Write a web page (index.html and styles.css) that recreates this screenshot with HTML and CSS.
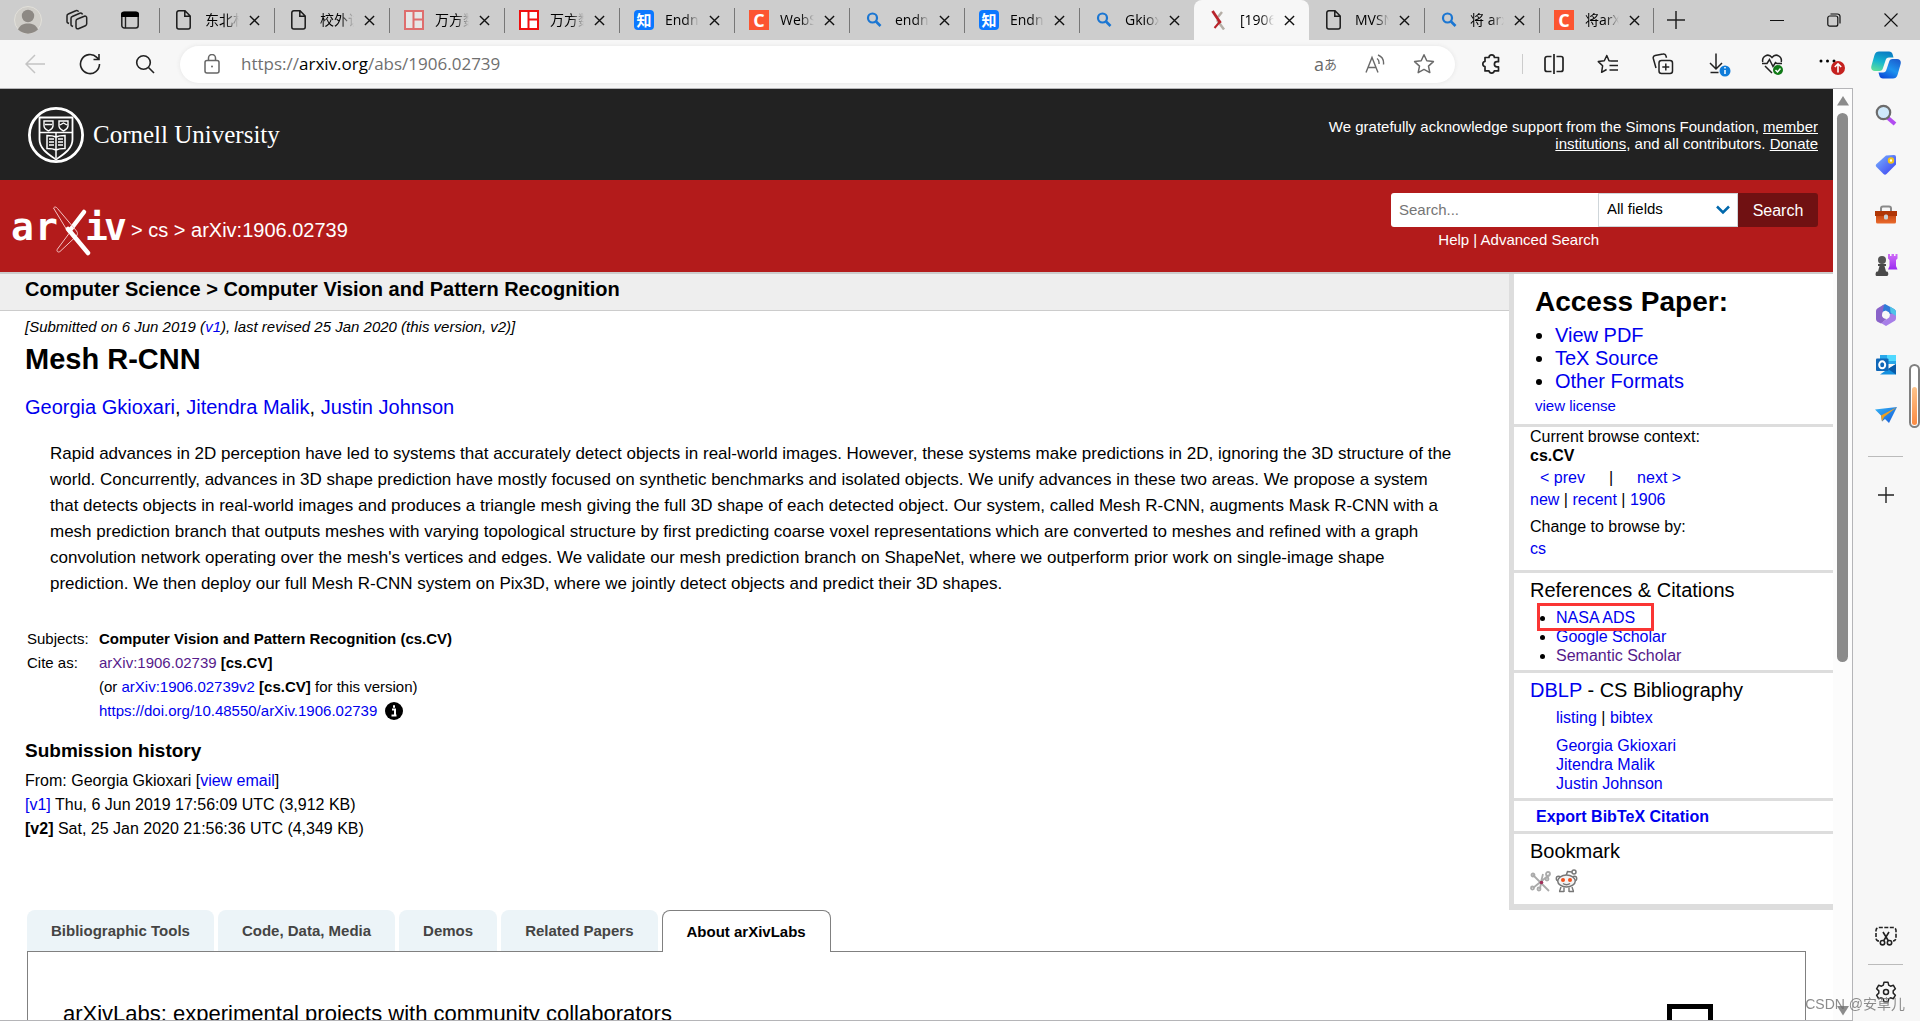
FILE: index.html
```html
<!DOCTYPE html>
<html lang="en">
<head>
  <meta charset="UTF-8">
  <meta name="viewport" content="width=device-width, initial-scale=1.0">
  <title>[1906.02739] Mesh R-CNN</title>
  <link rel="stylesheet" href="styles.css">
</head>
<body>
  <!-- Shared icons -->
  <svg class="defs" width="0" height="0">
    <symbol id="i-close" viewBox="0 0 12 12"><path d="M1 1l10 10M11 1L1 11" fill="none" stroke="#111" stroke-width="1.5"/></symbol>
    <symbol id="i-page" viewBox="0 0 20 20"><path d="M4.8 .8H11l5.200 5.200v10.900a2 2 0 0 1-2 2H4.800a2 2 0 0 1-2-2V2.800a2 2 0 0 1 2-2zM10.800 1v5.200H16" fill="none" stroke="#1a1a1a" stroke-width="1.500"/></symbol>
    <symbol id="i-wanfang" viewBox="0 0 20 20"><path fill="#fff" d="M0 0h20v20H0z"/><path d="M1 1h18v18H1zM9.500 1v18M9.500 9.500H19" fill="none" stroke="currentColor" stroke-width="2"/></symbol>
    <symbol id="i-search" viewBox="0 0 20 20"><circle cx="8.500" cy="8" r="4.500" fill="none" stroke="#1b76d2" stroke-width="2.200"/><path d="M12 11.500l4.500 4.500" stroke="#1b76d2" stroke-width="2.600"/></symbol>
    <linearGradient id="g-blue" x1="0" y1="0" x2="1" y2="1"><stop offset="0" stop-color="#35b5f5"/><stop offset="1" stop-color="#1557d8"/></linearGradient>
    <linearGradient id="g-teal" x1="0.500" y1="0" x2="0.200" y2="1"><stop offset="0" stop-color="#0a7fc4"/><stop offset="0.500" stop-color="#16b5cf"/><stop offset="1" stop-color="#5fe09a"/></linearGradient>
    <linearGradient id="g-sky" x1="0.800" y1="0" x2="0.200" y2="1"><stop offset="0" stop-color="#1b5fd0"/><stop offset="0.500" stop-color="#1d93ee"/><stop offset="1" stop-color="#0b48d8"/></linearGradient>
    <linearGradient id="g-tag" x1="0" y1="0" x2="1" y2="1"><stop offset="0" stop-color="#7ab5ff"/><stop offset="1" stop-color="#3b3cf0"/></linearGradient>
    <linearGradient id="g-bag" x1="0" y1="0" x2="0" y2="1"><stop offset="0" stop-color="#b83a08"/><stop offset="1" stop-color="#ea6a2c"/></linearGradient>
    <linearGradient id="g-rook" x1="0" y1="0" x2="0" y2="1"><stop offset="0" stop-color="#d06cf8"/><stop offset="1" stop-color="#9a2cf0"/></linearGradient>
  </svg>

  <!-- Tab strip -->
  <header class="tabstrip">
    <div class="strip-tools">
      <button class="icon-btn" aria-label="Profile"><svg width="28" height="28" viewBox="0 0 28 28"><circle cx="14" cy="14" r="13.500" fill="#d0cec9" stroke="#e2e0da"/><circle cx="14" cy="10" r="6.200" fill="#8d8984"/><path d="M4 23.500c2-4.500 5.500-6 10-6s8 1.500 10 6c-5.500 5.500-14.500 5.500-20 0z" fill="#8d8984"/></svg></button>
      <div class="strip-group">
        <button class="icon-btn" aria-label="Workspaces"><svg width="22" height="22" viewBox="0 0 22 22" fill="none" stroke="#222" stroke-width="1.500"><path d="M11.500 10l6.800-2.800a1.700 1.700 0 0 1 2.400 1.600v6a2 2 0 0 1-1.300 1.900l-7 3a1.700 1.700 0 0 1-2.400-1.600v-6.200a2 2 0 0 1 1.500-1.900zM7 17.500l-1-.5a1.500 1.500 0 0 1-1-1.500V9.500a2 2 0 0 1 1.300-2l7.500-3.300a2 2 0 0 1 2.700 1.300M3 14.500l-1-.5a1.500 1.500 0 0 1-1-1.500V7a2 2 0 0 1 1.300-2l7.500-3.300a2 2 0 0 1 2.700 1"/></svg></button>
        <button class="icon-btn" aria-label="Tab actions"><svg width="20" height="20" viewBox="0 0 20 20"><rect x="1.800" y="2.500" width="16.400" height="15.500" rx="2.500" fill="none" stroke="#222" stroke-width="1.500"/><path d="M1 7V4.500a3 3 0 0 1 3-3h12a3 3 0 0 1 3 3V7z"/><path d="M5.500 7v11" stroke="#222" stroke-width="1.400"/></svg></button>
      </div>
    </div>
    <nav class="tabs" aria-label="Open tabs">
      <div class="tab"><svg class="fav"><use href="#i-page"/></svg><span class="tab-title">东北林</span><button class="tab-close" aria-label="Close tab"><svg><use href="#i-close"/></svg></button></div>
      <div class="tab"><svg class="fav"><use href="#i-page"/></svg><span class="tab-title">校外访</span><button class="tab-close" aria-label="Close tab"><svg><use href="#i-close"/></svg></button></div>
      <div class="tab"><svg class="fav wanfang faded"><use href="#i-wanfang"/></svg><span class="tab-title">万方数</span><button class="tab-close" aria-label="Close tab"><svg><use href="#i-close"/></svg></button></div>
      <div class="tab"><svg class="fav wanfang"><use href="#i-wanfang"/></svg><span class="tab-title">万方数</span><button class="tab-close" aria-label="Close tab"><svg><use href="#i-close"/></svg></button></div>
      <div class="tab"><span class="fav fav-zhi">知</span><span class="tab-title">Endn</span><button class="tab-close" aria-label="Close tab"><svg><use href="#i-close"/></svg></button></div>
      <div class="tab"><span class="fav fav-c">C</span><span class="tab-title">WebS</span><button class="tab-close" aria-label="Close tab"><svg><use href="#i-close"/></svg></button></div>
      <div class="tab"><svg class="fav"><use href="#i-search"/></svg><span class="tab-title">endn</span><button class="tab-close" aria-label="Close tab"><svg><use href="#i-close"/></svg></button></div>
      <div class="tab"><span class="fav fav-zhi">知</span><span class="tab-title">Endn</span><button class="tab-close" aria-label="Close tab"><svg><use href="#i-close"/></svg></button></div>
      <div class="tab"><svg class="fav"><use href="#i-search"/></svg><span class="tab-title">Gkiox</span><button class="tab-close" aria-label="Close tab"><svg><use href="#i-close"/></svg></button></div>
      <div class="tab active"><svg class="fav" viewBox="0 0 20 20"><path d="M13 2l-4 5M8 10l7 9.500" stroke="#b5aea6" stroke-width="2.500"/><path d="M3.500 1l8 12" stroke="#b8232a" stroke-width="2.800"/><path d="M11.500 11l-6 7" stroke="#b8232a" stroke-width="2"/></svg><span class="tab-title">[1906</span><button class="tab-close" aria-label="Close tab"><svg><use href="#i-close"/></svg></button></div>
      <div class="tab"><svg class="fav"><use href="#i-page"/></svg><span class="tab-title">MVSN</span><button class="tab-close" aria-label="Close tab"><svg><use href="#i-close"/></svg></button></div>
      <div class="tab"><svg class="fav"><use href="#i-search"/></svg><span class="tab-title">将 arx</span><button class="tab-close" aria-label="Close tab"><svg><use href="#i-close"/></svg></button></div>
      <div class="tab last"><span class="fav fav-c">C</span><span class="tab-title">将arX</span><button class="tab-close" aria-label="Close tab"><svg><use href="#i-close"/></svg></button></div>
    </nav>
    <button class="icon-btn new-tab" aria-label="New tab"><svg width="18" height="18" viewBox="0 0 18 18"><path d="M9 0v18M0 9h18" stroke="#222" stroke-width="1.500"/></svg></button>
    <div class="window-controls">
      <button class="icon-btn" aria-label="Minimize"><svg width="14" height="14" viewBox="0 0 14 14"><path d="M0 7.500h14" stroke="#111"/></svg></button>
      <button class="icon-btn" aria-label="Restore"><svg width="14" height="14" viewBox="0 0 14 14" fill="none" stroke="#111" stroke-width="1.200"><rect x=".8" y="3" width="10" height="10.200" rx="2"/><path d="M3.500 1h7a2.500 2.500 0 0 1 2.500 2.500v7"/></svg></button>
      <button class="icon-btn" aria-label="Close window"><svg width="14" height="14" viewBox="0 0 14 14"><path d="M.5 .5l13 13M13.500 .5l-13 13" stroke="#111" stroke-width="1.100"/></svg></button>
    </div>
  </header>

  <div class="window">
    <div class="content">
      <!-- Toolbar -->
      <div class="toolbar">
        <button class="icon-btn" aria-label="Back"><svg width="20" height="20" viewBox="0 0 20 20" fill="none" stroke="#c4c4c4" stroke-width="1.500"><path d="M20 10H1M10 1L1 10l9 9"/></svg></button>
        <button class="icon-btn" aria-label="Refresh"><svg width="22" height="22" viewBox="0 0 22 22" fill="none" stroke="#222" stroke-width="1.600"><path d="M20.500 11A9.500 9.500 0 1 1 17.800 4.400L20 6.500M20 1v5.500h-5.500"/></svg></button>
        <button class="icon-btn" aria-label="Search"><svg width="20" height="20" viewBox="0 0 20 20" fill="none" stroke="#222" stroke-width="1.600"><circle cx="8.500" cy="8.500" r="6.800"/><path d="M13.500 13.500l5.500 5.500"/></svg></button>
        <div class="address">
          <svg width="16" height="20" viewBox="0 0 16 20" fill="none" stroke="#666" stroke-width="1.500"><rect x="1" y="6.500" width="14" height="12.500" rx="2"/><path d="M4.500 6.500V4a3.500 3.500 0 0 1 7 0v2.500"/><circle cx="8" cy="12.500" r="1" fill="#666" stroke="none"/></svg>
          <span class="url">https://<b>arxiv.org</b>/abs/1906.02739</span>
          <button class="icon-btn translate" aria-label="Translate">a<small>あ</small></button>
          <button class="icon-btn" aria-label="Read aloud"><svg width="20" height="20" viewBox="0 0 20 20" fill="none" stroke="#6a6a6a" stroke-width="1.400"><path d="M1 18.500L7 3.500l6 15M3 13.500h8M12 4.500c1.500 1 2.300 3 2 5.500M13 1c3.800 1.500 6 5 5.500 9.500"/></svg></button>
          <button class="icon-btn" aria-label="Add to favorites"><svg width="22" height="22" viewBox="0 0 22 22" fill="none" stroke="#6a6a6a" stroke-width="1.500" stroke-linejoin="round"><path d="M11 1.800l2.800 6 6.600.8-4.900 4.500 1.300 6.500L11 16.400l-5.800 3.200 1.300-6.500L1.600 8.600l6.600-.8z"/></svg></button>
        </div>
        <div class="actions">
          <button class="icon-btn" aria-label="Extensions"><svg width="20" height="22" viewBox="0 0 20 22" fill="none" stroke="#222" stroke-width="1.700" stroke-linejoin="round"><path d="M4 4.500h4a2.700 2.700 0 0 1 5.400 0H17.500v4.200h-1.500a2.600 2.600 0 0 0 0 5.200h1.500v4h-4.200a2.700 2.700 0 0 1-5.300 0H4v-4.200a2.700 2.700 0 0 1 0-5.300z"/></svg></button>
          <span class="divider"></span>
          <button class="icon-btn" aria-label="Split screen"><svg width="20" height="20" viewBox="0 0 20 20" fill="none" stroke="#222" stroke-width="1.700"><path d="M10 0v20M7.500 2.500H3a2 2 0 0 0-2 2v11a2 2 0 0 0 2 2h4.500M12.500 2.500H17a2 2 0 0 1 2 2v11a2 2 0 0 1-2 2h-4.500"/></svg></button>
          <button class="icon-btn" aria-label="Favorites"><svg width="22" height="20" viewBox="0 0 22 20" fill="none" stroke="#222" stroke-width="1.500" stroke-linejoin="round"><path d="M14 7l-2-.3L9.800 1.500 7.300 6.700l-6 .9 4.300 4.200-1 6.500 5-2.800M14 7h7M12.500 11.500H21M12.500 16H21"/></svg></button>
          <button class="icon-btn" aria-label="Collections"><svg width="22" height="22" viewBox="0 0 22 22" fill="none" stroke="#222" stroke-width="1.500"><rect x="7" y="7.500" width="13.500" height="13" rx="2.500"/><path d="M13.800 10.500v7M10.300 14h7M4 15l-2.700-9.500a2.500 2.500 0 0 1 1.800-3L11 1a2.500 2.500 0 0 1 3 2l.5 1.800"/></svg></button>
          <button class="icon-btn" aria-label="Downloads"><svg class="badged" width="20" height="24" viewBox="0 0 20 24" fill="none" stroke="#222" stroke-width="1.500"><path d="M9 1.500v15M3 11l6 6 6-6M3.500 20.500h8"/><circle cx="18" cy="19" r="5.500" fill="#0f7cd9" stroke="none"/><path d="M18 18v4M18 15v1.500" stroke="#fff"/></svg></button>
          <button class="icon-btn" aria-label="Browser essentials"><svg width="24" height="24" viewBox="0 0 24 24" fill="none" stroke="#222" stroke-width="1.500"><path d="M2.800 10C1.500 4.500 8 .5 12 5.500 16 .5 22.500 4.500 21.200 10M2 11.500h5l2.500-4 3.500 7 2.500-4 1.500 1H22M5 14l7 7"/><circle cx="18" cy="18" r="5" fill="#117a18" stroke="none"/><path d="M15.500 18l2 2 3-3.500" stroke="#fff"/></svg></button>
          <button class="icon-btn" aria-label="Settings and more"><svg width="28" height="28" viewBox="0 0 28 28"><circle cx="4" cy="11" r="1.500"/><circle cx="10.500" cy="11" r="1.500"/><circle cx="17" cy="11" r="1.500"/><circle cx="21" cy="18" r="7" fill="#c5211f"/><path d="M21 22.500v-8M17.800 17l3.200-3.200 3.200 3.200" fill="none" stroke="#fff" stroke-width="1.600"/></svg></button>
        </div>
      </div>

      <div class="viewport">
        <div class="page">
          <!-- Cornell banner -->
          <div class="cornell">
            <a href="#" class="cornell-logo">
              <svg width="56" height="56" viewBox="0 0 56 56" fill="none" stroke="#fff"><circle cx="28" cy="28" r="26.600" stroke-width="2.800"/><path d="M11.500 10.500h33v22c0 9-8 14-16.500 20-8.500-6-16.500-11-16.500-20z" stroke-width="1.800"/><path d="M11 25.500h34" stroke-width="1.500"/><path d="M16 14h9v5c0 2.500-2 3.500-4.500 5-2.500-1.500-4.500-2.500-4.500-5zM31 14h9v5c0 2.500-2 3.500-4.500 5-2.500-1.500-4.500-2.500-4.500-5zM17 17.500h7M32 18l3.500-2 3.500 2" stroke-width="1.400"/><path d="M19 28.500c3 0 6 0 9 1.500 3-1.500 6-1.500 9-1.500v13c-3 0-6 0-9 1.500-3-1.500-6-1.500-9-1.500zM28 26v25M21 32h5M21 35h5M21 38h5M30 32h5M30 35h5M30 38h5" stroke-width="1.500"/></svg>
              <span>Cornell University</span>
            </a>
            <p class="support">We gratefully acknowledge support from the Simons Foundation, <a href="#">member institutions</a>, and all contributors. <a href="#">Donate</a></p>
          </div>

          <!-- arXiv header -->
          <div class="arxiv-header">
            <div class="crumbs">
              <svg class="arxiv-logo" width="115" height="52" viewBox="0 0 115 52" aria-label="arXiv">
                <g class="logo-text"><text x="-1" y="36">a</text><text x="23" y="36">r</text><text x="73" y="36">i</text><text x="92" y="36">v</text></g>
                <path d="M72 8L59 25" stroke="#fff" stroke-width="4.500" stroke-linecap="round"/>
                <path d="M41.500 4c1.500-1.800 3-.8 4 .5L64.500 27c1.500 2 1 3.500 0 5L48 47.500c-2 1.500-4-.5-2.500-2.500L57 29.500z" fill="none" stroke="#f4c4c4" stroke-width="1"/>
                <path d="M56 25L76 49" stroke="#fff" stroke-width="4.500" stroke-linecap="round"/>
              </svg>
              <span>&gt; <a href="#">cs</a> &gt; arXiv:1906.02739</span>
            </div>
            <form class="search">
              <div class="search-row">
                <input type="text" placeholder="Search..." aria-label="Search term or terms">
                <div class="select-wrap">
                  <select aria-label="Field to search"><option>All fields</option></select>
                  <svg width="16" height="16" viewBox="0 0 16 16"><path d="M2 4.500l6 6 6-6" fill="none" stroke="#0068ac" stroke-width="2.500"/></svg>
                </div>
                <button type="button">Search</button>
              </div>
              <div class="search-help"><a href="#">Help</a> | <a href="#">Advanced Search</a></div>
            </form>
          </div>

          <div class="abs-row">
            <main class="abs">
              <div class="subject-bar"><h1>Computer Science &gt; Computer Vision and Pattern Recognition</h1></div>
              <div class="abs-body">
                <div class="dateline">[Submitted on 6 Jun 2019 (<a href="#">v1</a>), last revised 25 Jan 2020 (this version, v2)]</div>
                <h2 class="title">Mesh R-CNN</h2>
                <div class="authors"><a href="#">Georgia Gkioxari</a>, <a href="#">Jitendra Malik</a>, <a href="#">Justin Johnson</a></div>
                <blockquote class="abstract">Rapid advances in 2D perception have led to systems that accurately detect objects in real-world images. However, these systems make predictions in 2D, ignoring the 3D structure of the world. Concurrently, advances in 3D shape prediction have mostly focused on synthetic benchmarks and isolated objects. We unify advances in these two areas. We propose a system that detects objects in real-world images and produces a triangle mesh giving the full 3D shape of each detected object. Our system, called Mesh R-CNN, augments Mask R-CNN with a mesh prediction branch that outputs meshes with varying topological structure by first predicting coarse voxel representations which are converted to meshes and refined with a graph convolution network operating over the mesh's vertices and edges. We validate our mesh prediction branch on ShapeNet, where we outperform prior work on single-image shape prediction. We then deploy our full Mesh R-CNN system on Pix3D, where we jointly detect objects and predict their 3D shapes.</blockquote>
                <table class="metatable">
                  <tr><td>Subjects:</td><td><b>Computer Vision and Pattern Recognition (cs.CV)</b></td></tr>
                  <tr><td>Cite as:</td><td><a href="#" class="visited">arXiv:1906.02739</a> <b>[cs.CV]</b></td></tr>
                  <tr><td></td><td>(or <a href="#">arXiv:1906.02739v2</a> <b>[cs.CV]</b> for this version)</td></tr>
                  <tr><td></td><td><div class="doi"><a href="#">https://doi.org/10.48550/arXiv.1906.02739</a><svg width="18" height="18" viewBox="0 0 18 18"><circle cx="9" cy="9" r="9"/><path d="M7 7.500h3v5.500M6.500 13.500h5M9 3.300v2.400" fill="none" stroke="#fff" stroke-width="2"/></svg></div></td></tr>
                </table>
                <div class="history">
                  <h2>Submission history</h2>
                  <p>From: Georgia Gkioxari [<a href="#">view email</a>]</p>
                  <p><a href="#">[v1]</a> Thu, 6 Jun 2019 17:56:09 UTC (3,912 KB)</p>
                  <p><b>[v2]</b> Sat, 25 Jan 2020 21:56:36 UTC (4,349 KB)</p>
                </div>
              </div>
            </main>

            <aside class="extra">
              <section class="access">
                <h2>Access Paper:</h2>
                <ul>
                  <li><a href="#">View PDF</a></li>
                  <li><a href="#">TeX Source</a></li>
                  <li><a href="#">Other Formats</a></li>
                </ul>
                <a href="#" class="license">view license</a>
              </section>
              <section class="browse">
                <p>Current browse context:</p>
                <p><b>cs.CV</b></p>
                <p class="prevnext"><a href="#">&lt; prev</a><span>|</span><a href="#">next &gt;</a></p>
                <p class="links"><a href="#">new</a> | <a href="#">recent</a> | <a href="#">1906</a></p>
                <p class="links change">Change to browse by:</p>
                <p class="links"><a href="#">cs</a></p>
              </section>
              <section class="refs">
                <h3>References &amp; Citations</h3>
                <ul>
                  <li class="marked"><a href="#">NASA ADS</a></li>
                  <li><a href="#">Google Scholar</a></li>
                  <li><a href="#" class="visited">Semantic Scholar</a></li>
                </ul>
              </section>
              <section class="dblp">
                <h3><a href="#">DBLP</a> - CS Bibliography</h3>
                <p><a href="#">listing</a> | <a href="#">bibtex</a></p>
                <p class="dblp-authors"><a href="#">Georgia Gkioxari</a><a href="#">Jitendra Malik</a><a href="#">Justin Johnson</a></p>
              </section>
              <section class="export"><a href="#">Export BibTeX Citation</a></section>
              <section class="bookmark">
                <h3>Bookmark</h3>
                <div class="bookmark-icons">
                  <a href="#" aria-label="BibSonomy"><svg width="22" height="24" viewBox="0 0 22 24" fill="none" stroke="#aaa" stroke-width="1.800"><path d="M3 6l16 16M19 6L3 19M11 13l2-8M11 14l-1 6"/><circle cx="3" cy="6" r="1.500"/><circle cx="18" cy="5" r="2"/><circle cx="17" cy="10" r="1.500"/><circle cx="2.500" cy="19" r="1.500"/><circle cx="9" cy="20" r="1.500"/><circle cx="11.500" cy="13.500" r="1.800" fill="#a0305a" stroke="none"/></svg></a>
                  <a href="#" aria-label="Reddit"><svg width="24" height="24" viewBox="0 0 24 24" fill="none" stroke="#777" stroke-width="1.500"><path d="M11 7l1.500-4.500L17 3"/><circle cx="19" cy="3" r="2"/><circle cx="3.500" cy="9.500" r="2.200"/><circle cx="19.500" cy="9.500" r="2.200"/><ellipse cx="11.500" cy="12" rx="8.800" ry="6" fill="#f3f3f3"/><path d="M6 18l-1.500 4.500M9 18.500V23M14 18.500V23M17 18l1.500 4.500M8 14.500c2 1.500 5 1.500 7 0" stroke-width="1.400"/><path d="M4 22.500h5M14 22.500h5"/><circle cx="8" cy="11" r="2" fill="#f4511e" stroke="none"/><circle cx="15" cy="11" r="2" fill="#f4511e" stroke="none"/></svg></a>
                </div>
              </section>
            </aside>
          </div>

          <!-- arXivLabs tabs -->
          <div class="labs">
            <div class="labs-tabs">
              <button>Bibliographic Tools</button>
              <button>Code, Data, Media</button>
              <button>Demos</button>
              <button>Related Papers</button>
              <button class="current">About arXivLabs</button>
            </div>
            <div class="labs-panel">
              <h2>arXivLabs: experimental projects with community collaborators</h2>
              <div class="labs-art"></div>
            </div>
          </div>
        </div>

        <div class="scrollbar">
          <svg width="12" height="10" viewBox="0 0 12 10"><path d="M6 0l6 9.500H0z" fill="#8b8b8b"/></svg>
          <div class="track"><div class="thumb"></div></div>
          <svg width="12" height="10" viewBox="0 0 12 10"><path d="M6 9.500L12 0H0z" fill="#8b8b8b"/></svg>
        </div>
      </div>
    </div>

    <!-- Browser sidebar -->
    <aside class="side">
      <button class="icon-btn copilot" aria-label="Copilot"><svg width="30" height="28" viewBox="0 0 30 28"><path d="M8 .5h10c2 0 3 1 3.500 2.500l1 3.500H18c-2 0-3 1-3.500 3l-2.500 7.500c-.5 2-1.500 3-3.500 3H4c-3 0-4.500-2-3.500-5.500l3-10.500C4.200 1.500 6 .5 8 .5z" fill="url(#g-teal)"/><path d="M22 27.500H12c-2 0-3-1-3.500-2.500l-1-3.500H12c2 0 3-1 3.500-3L18 11c.5-2 1.500-3 3.500-3H26c3 0 4.500 2 3.500 5.500l-3 10.500c-.7 2.500-2.500 3.500-4.500 3.500z" fill="url(#g-sky)"/></svg></button>
      <button class="icon-btn" aria-label="Search"><svg width="22" height="22" viewBox="0 0 22 22"><path d="M13 14l7 6" stroke="#b24cf0" stroke-width="4"/><circle cx="8.500" cy="8.500" r="6.700" fill="#cfe9fb" stroke="#6c6c6c" stroke-width="2.200"/></svg></button>
      <button class="icon-btn" aria-label="Shopping"><svg width="22" height="22" viewBox="0 0 22 22"><path d="M11 1.500L19 1a2 2 0 0 1 2 2v7.500L11.500 20c-1 1-2 1-3 0L1.500 13c-1-1-1-2 0-3z" fill="url(#g-tag)"/><circle cx="16" cy="6.500" r="2.200" fill="#fff" stroke="#f5c518" stroke-width="2"/></svg></button>
      <button class="icon-btn" aria-label="Tools"><svg width="24" height="22" viewBox="0 0 24 22"><path d="M7 7V4.500a2 2 0 0 1 2-2h6a2 2 0 0 1 2 2V7" fill="none" stroke="#8a8a8a" stroke-width="2"/><rect x="2" y="7" width="20" height="12.500" rx="1.500" fill="url(#g-bag)"/><path d="M1 7h22v5H1z" fill="#b03606"/><rect x="10" y="10.500" width="4" height="5" rx="1.500" fill="#c8d0d4"/></svg></button>
      <button class="icon-btn" aria-label="Games"><svg width="24" height="24" viewBox="0 0 24 24"><path d="M14 1h2v2h1.500V1h2.500v2h1.500V1h2v4.500l-1.500 1.500v6l1.500 3.500H14l1.500-3.500V7L14 5.500z" fill="url(#g-rook)"/><circle cx="8" cy="7" r="4" fill="#555"/><path d="M4 11h8v2h-1.500l1.500 5.500h1c1.500 0 2 4.500 0 4.500H2.500c-1.500 0-1-4.500.5-4.500h1L5.500 13H4z" fill="#4a4a4a"/></svg></button>
      <button class="icon-btn" aria-label="Microsoft 365"><svg width="22" height="22" viewBox="0 0 22 22"><path d="M10 0l9 5c1.500 1 2 2 2 3.500V12l-7-2-3-3.500-4 1.500V2z" fill="#2f7bd8"/><path d="M21 8v6c0 1.500-.5 2.500-2 3.300L11 22l-5-3 6-4 3-5z" fill="#a77ee8"/><path d="M9 .5L3 4C1.500 5 1 6 1 7.500V15c0 1.500 1 2.500 2.500 3.300L6 19.500l5.500-4.500L7 12z" fill="#8a63c9"/><path d="M15 2.500l4 2.500c1.500 1 2 2 2 3.500V12l-5.500-3.500z" fill="#4fc3e8"/><circle cx="11" cy="11" r="3.800" fill="#f7f7f7"/></svg></button>
      <button class="icon-btn" aria-label="Outlook"><svg width="22" height="22" viewBox="0 0 22 22"><path d="M5 1h16v9H5z" fill="#28a8ea"/><path d="M12 1h9v6h-9z" fill="#50d9ff"/><path d="M5 20.500h16V10l-8 5z" fill="#1490df"/><path d="M21 10v10.500L13 15z" fill="#0a5ba8"/><rect x="1" y="4.500" width="12.500" height="12.500" rx="1" fill="#0f67b8"/><ellipse cx="7.200" cy="10.800" rx="3" ry="3.500" fill="none" stroke="#fff" stroke-width="2"/></svg></button>
      <button class="icon-btn" aria-label="Drop"><svg width="22" height="22" viewBox="0 0 22 22"><path d="M0 5.500L22 3 14 19l-4-4-3 2.500-1-6z" fill="url(#g-blue)"/><path d="M22 3L6 11.500l1 6L9 13z" fill="#f0a020"/></svg></button>
      <hr>
      <button class="icon-btn" aria-label="Add to sidebar"><svg width="16" height="16" viewBox="0 0 16 16"><path d="M8 0v16M0 8h16" stroke="#222" stroke-width="1.400"/></svg></button>
      <div class="side-bottom">
        <button class="icon-btn" aria-label="Screenshot"><svg width="22" height="20" viewBox="0 0 22 20" fill="none" stroke="#222" stroke-width="1.600"><path d="M4 15a3 3 0 0 1-3-3V4.500a3 3 0 0 1 3-3h14a3 3 0 0 1 3 3V12a3 3 0 0 1-3 3" stroke-dasharray="4 1.500"/><path d="M8 6l5.500 9M14 6l-5.500 9"/><circle cx="7.500" cy="16.700" r="2.200"/><circle cx="14.500" cy="16.700" r="2.200"/></svg></button>
        <hr>
        <button class="icon-btn" aria-label="Settings"><svg width="22" height="22" viewBox="0 0 22 22" fill="none" stroke="#222" stroke-width="1.500" stroke-linejoin="round"><path d="M9 1.200h4l.7 3 1.800 1 2.900-.9 2 3.500-2.200 2.100v2.200l2.200 2.100-2 3.500-2.900-.9-1.800 1-.7 3H9l-.7-3-1.800-1-2.900.9-2-3.500 2.200-2.100V9.900L1.600 7.800l2-3.500 2.900.9 1.800-1z"/><circle cx="11" cy="11" r="2.500"/></svg></button>
      </div>
    </aside>
  </div>

  <div class="meter"><span></span></div>
  <div class="watermark">CSDN @安草儿</div>
</body>
</html>
```

FILE: styles.css
```css
* {
  box-sizing: border-box;
}

body {
  margin: 0;
  height: 100vh;
  display: flex;
  flex-direction: column;
  overflow: hidden;
  background: #f7f7f7;
  font-family: "Liberation Sans", Arial, sans-serif;
  color: #000;
}

h1, h2, h3, p, ul, blockquote {
  margin: 0;
  padding: 0;
}

a {
  color: #0000ee;
  text-decoration: none;
}

a.visited {
  color: #551a8b;
}

button {
  font-family: inherit;
  border: 0;
  padding: 0;
  background: none;
}

svg {
  display: block;
  flex: none;
}

.defs {
  position: absolute;
}

.icon-btn {
  display: flex;
  align-items: center;
  justify-content: center;
  flex: none;
}

/* Tab strip */
.tabstrip {
  display: flex;
  height: 40px;
  flex: none;
  background: #cdcdcd;
  font-family: "Open Sans", "Noto Sans CJK SC", sans-serif;
}

.strip-tools {
  display: flex;
  align-items: center;
  gap: 24px;
  padding: 0 19px 0 14px;
}

.strip-group {
  display: flex;
  align-items: center;
  gap: 32px;
}

.tabs {
  display: flex;
  flex: 0 1 1495px;
  min-width: 0;
}

.tab {
  display: flex;
  align-items: center;
  flex: 1 1 0;
  min-width: 0;
  padding: 0 14px 0 15px;
  position: relative;
}

.tab::before {
  content: "";
  position: absolute;
  left: 0;
  top: 8px;
  height: 25px;
  border-left: 1px solid #777;
}

.tab.active {
  background: #f7f7f7;
  border-radius: 8px 8px 0 0;
}

.tab.active::before,
.tab.active + .tab::before {
  display: none;
}

.tab.last::after {
  content: "";
  position: absolute;
  right: 0;
  top: 8px;
  height: 25px;
  border-left: 1px solid #777;
}

.fav {
  width: 20px;
  height: 20px;
  flex: none;
  font-size: 15px;
  line-height: 20px;
  text-align: center;
  color: #fff;
}

.wanfang {
  color: #f01010;
}

.faded {
  opacity: 0.5;
}

.fav-zhi {
  border-radius: 4px;
  background: #0b78ff;
  font-weight: bold;
}

.fav-c {
  background: #fc5531;
  font-size: 18px;
  font-weight: bold;
}

.tab-title {
  flex: 1;
  min-width: 0;
  margin: 0 10px 0 11px;
  overflow: hidden;
  white-space: nowrap;
  font-size: 14px;
  line-height: 20px;
  mask-image: linear-gradient(to right, #000 60%, transparent);
}

.tab-close svg {
  width: 11px;
  height: 11px;
}

.new-tab {
  width: 44px;
}

.window-controls {
  display: flex;
  align-items: center;
  gap: 43px;
  margin-left: auto;
  padding-right: 22px;
}

/* Window */
.window {
  display: flex;
  flex: 1;
  min-height: 0;
}

.content {
  display: flex;
  flex-direction: column;
  flex: 1;
  min-width: 0;
}

.toolbar {
  display: flex;
  align-items: center;
  height: 48px;
  flex: none;
  gap: 34px;
  padding: 0 8px 0 25px;
}

.address {
  display: flex;
  align-items: center;
  flex: 1;
  height: 37px;
  gap: 28px;
  margin: 0 -8px 0 -9px;
  padding: 0 20px 0 24px;
  border-radius: 19px;
  background: #fff;
  box-shadow: 0 0 4px #e4e4e4;
  font-family: "Open Sans", "Noto Sans CJK JP", sans-serif;
}

.url {
  flex: 1;
  margin-left: -7px;
  font-size: 17px;
  line-height: 22px;
  color: #6f6f6f;
}

.url b {
  font-weight: normal;
  color: #000;
}

.translate {
  font-family: inherit;
  font-size: 18px;
  line-height: 24px;
  color: #6a6a6a;
}

.translate small {
  font-size: 13px;
}

.actions {
  display: flex;
  align-items: center;
  gap: 33px;
}

.badged {
  overflow: visible;
}

.divider {
  width: 1px;
  height: 20px;
  margin: 0 -12px;
  background: #ccc;
}

.viewport {
  display: flex;
  flex: 1;
  min-height: 0;
  border: solid #b5b5b8;
  border-width: 1px 1px 1px 0;
  background: #fff;
}

.page {
  flex: 1;
  min-width: 0;
  overflow: hidden;
}

/* Cornell banner */
.cornell {
  display: flex;
  align-items: center;
  justify-content: space-between;
  height: 91px;
  padding: 0 15px 0 28px;
  background: #222;
  color: #fff;
}

.cornell-logo {
  display: flex;
  align-items: center;
  gap: 9px;
  color: #fff;
  font-family: "Liberation Serif", serif;
  font-size: 25px;
  line-height: 30px;
}

.support {
  width: 500px;
  text-align: right;
  font-size: 15px;
  line-height: 17px;
}

.support a {
  color: #fff;
  text-decoration: underline;
}

/* arXiv header */
.arxiv-header {
  display: flex;
  justify-content: space-between;
  height: 94px;
  padding: 13px 15px 0 12px;
  border-bottom: 2px solid #ccc;
  background: #b31b1b;
  color: #fff;
}

.arxiv-header a {
  color: #fff;
}

.crumbs {
  display: flex;
  align-items: center;
  gap: 4px;
  height: 74px;
  font-size: 20px;
}

.logo-text {
  fill: #fff;
  font: bold 38px "DejaVu Sans Mono", monospace;
}

.search-row {
  display: flex;
  height: 34px;
}

.search-row input,
.search-row select {
  height: 34px;
  margin: 0;
  border: 1px solid #cfd6da;
  border-radius: 0;
  background: #fff;
  font-family: inherit;
  font-size: 15px;
  color: #000;
}

.search-row input {
  width: 208px;
  padding: 0 8px 1px;
  border-width: 0 1px 0 0;
  border-radius: 3px 0 0 3px;
}

.search-row select {
  width: 139px;
  padding: 0 8px 3px;
  border-left: 0;
  appearance: none;
}

.select-wrap {
  position: relative;
}

.select-wrap svg {
  position: absolute;
  right: 7px;
  top: 9px;
  pointer-events: none;
}

.search-row button {
  width: 80px;
  padding-top: 1px;
  border-radius: 0 3px 3px 0;
  background: #701112;
  color: #fff;
  font-size: 16px;
}

.search-help {
  width: 208px;
  margin-top: 4px;
  text-align: right;
  font-size: 15px;
  line-height: 18px;
}

/* Abstract page */
.abs-row {
  display: flex;
}

.abs {
  flex: 1;
  min-width: 0;
}

.subject-bar {
  height: 37px;
  padding-left: 25px;
  border-bottom: 1px solid #ccc;
  background: #eee;
}

.subject-bar h1 {
  font-size: 20px;
  line-height: 30px;
}

.abs-body {
  padding: 6px 25px 0;
}

.dateline {
  font-size: 15px;
  line-height: 20px;
  font-style: italic;
}

.title {
  margin-top: 4px;
  font-size: 29px;
  line-height: 36px;
}

.authors {
  margin-top: 18px;
  font-size: 20px;
  line-height: 24px;
}

.abstract {
  margin: 22px 25px 30px;
  font-size: 17px;
  line-height: 26px;
}

.metatable {
  border-spacing: 0;
  font-size: 15px;
  line-height: 24px;
}

.metatable td {
  padding: 0 2px;
}

.metatable td:first-child {
  width: 72px;
}

.doi {
  display: flex;
  align-items: center;
  gap: 8px;
}

.history {
  margin-top: 16px;
  font-size: 16px;
  line-height: 24px;
}

.history h2 {
  margin-bottom: 6px;
  font-size: 19px;
}

/* Right column */
.extra {
  width: 324px;
  flex: none;
  border-left: 5px solid #ddd;
  border-bottom: 3px solid #ddd;
}

.extra section {
  padding: 5px 0 5px 16px;
  border-bottom: 3px solid #ddd;
  font-size: 16px;
  line-height: 19px;
}

.extra ul {
  padding-left: 26px;
}

.extra h3 {
  font-size: 20px;
  font-weight: normal;
  line-height: 24px;
}

.extra .access {
  padding: 10px 0 8px 21px;
}

.access h2 {
  font-size: 28px;
  line-height: 36px;
}

.extra .access ul {
  margin: 4px 0 3px;
  padding-left: 20px;
  font-size: 20px;
  line-height: 23px;
}

.license {
  display: block;
  font-size: 15px;
  line-height: 20px;
}

.extra .browse {
  padding-top: 0;
  padding-bottom: 10px;
}

.prevnext {
  display: flex;
  gap: 24px;
  margin-top: 2px;
  padding-left: 10px;
  line-height: 22px;
}

.links {
  line-height: 22px;
}

.change {
  margin-top: 5px;
}

.refs ul {
  margin-top: 6px;
}

.marked {
  position: relative;
}

/* highlight frame round one entry */
.marked::after {
  content: "";
  position: absolute;
  left: -19px;
  top: -5px;
  width: 111px;
  height: 22px;
  border: 3px solid #fa3534;
}

.dblp p {
  margin-top: 6px;
  padding-left: 26px;
}

.dblp .dblp-authors {
  margin-top: 9px;
}

.dblp-authors a {
  display: block;
}

.extra .export {
  padding: 6px 0 4px 22px;
  font-weight: bold;
  line-height: 20px;
}

.extra .bookmark {
  padding-bottom: 11px;
}

.bookmark-icons {
  display: flex;
  gap: 3px;
  margin-top: 6px;
}

/* arXivLabs */
.labs {
  padding: 0 27px;
}

.labs-tabs {
  display: flex;
  gap: 4px;
}

.labs-tabs button {
  height: 41px;
  padding: 0 24px;
  border-radius: 8px 8px 0 0;
  background: #ecf4f8;
  font-size: 15px;
  font-weight: bold;
  color: #444;
}

.labs-tabs .current {
  position: relative;
  height: 42px;
  margin-bottom: -1px;
  border: 1px solid #808080;
  border-bottom: 0;
  background: #fff;
  color: #000;
}

.labs-panel {
  display: flex;
  justify-content: space-between;
  padding: 48px 92px 48px 35px;
  border: 1px solid #808080;
}

.labs-panel h2 {
  font-size: 22px;
  font-weight: normal;
  line-height: 28px;
}

.labs-art {
  width: 46px;
  height: 60px;
  margin-top: 4px;
  border: 5px solid #000;
}

/* Scrollbar */
.scrollbar {
  display: flex;
  flex-direction: column;
  align-items: center;
  width: 19px;
  padding: 7px 0 4px;
  background: #fcfcfc;
}

.track {
  flex: 1;
  margin: 7px 0;
}

.thumb {
  width: 11px;
  height: 62%;
  border-radius: 6px;
  background: #8b8b8b;
}

/* Browser sidebar */
.side {
  display: flex;
  flex-direction: column;
  align-items: center;
  width: 67px;
  flex: none;
  padding: 10px 2px 0 0;
}

.side .icon-btn {
  height: 50px;
}

.side .copilot {
  height: 30px;
  margin-bottom: 10px;
}

.side hr {
  width: 35px;
  margin: 16px 0 13px;
  border: 0;
  border-top: 1px solid #bbb;
}

.side-bottom {
  display: flex;
  flex-direction: column;
  align-items: center;
  margin-top: auto;
  padding-bottom: 4px;
}

.side-bottom hr {
  margin: 3px 0 2px;
}

/* Overlays */
.meter {
  position: fixed;
  right: 0;
  top: 364px;
  display: flex;
  align-items: flex-end;
  width: 11px;
  height: 64px;
  padding: 1px;
  border: 2px solid #808080;
  border-radius: 6px;
  background: #fff;
}

.meter span {
  flex: 1;
  height: 65%;
  border-radius: 3px;
  background: linear-gradient(#fdc48c, #fb8a42);
}

.watermark {
  position: fixed;
  right: 15px;
  bottom: 7px;
  font-family: "Liberation Sans", "Noto Sans CJK SC", sans-serif;
  font-size: 14px;
  line-height: 20px;
  color: rgba(110, 110, 110, 0.8);
}
```
